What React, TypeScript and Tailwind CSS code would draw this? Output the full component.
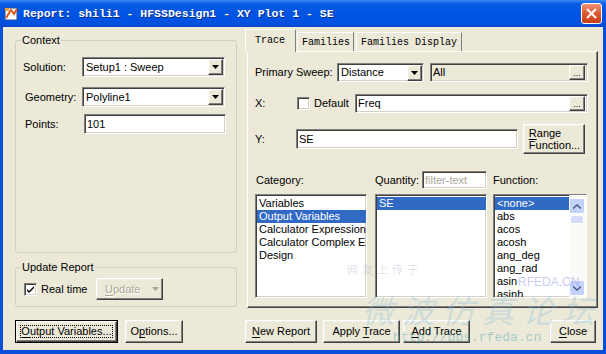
import React from "react";

const sunken =
  "border border-t-[#808080] border-l-[#808080] border-r-white border-b-white shadow-[inset_1px_1px_0_#404040,inset_-1px_-1px_0_#d4d0c8]";
const raised =
  "border border-t-white border-l-white border-r-[#404040] border-b-[#404040] shadow-[inset_-1px_-1px_0_#808080,inset_1px_1px_0_#f1efe2]";

function Arrow({ color = "#000" }: { color?: string }) {
  return (
    <svg width="7" height="4" viewBox="0 0 7 4">
      <path d="M0 0h7L3.5 4z" fill={color} />
    </svg>
  );
}

function DropBtn() {
  return (
    <div className={`w-[15px] h-[16px] bg-[#ece9d8] flex items-center justify-center ${raised}`}>
      <Arrow />
    </div>
  );
}

function Combo({ className = "", value }: { className?: string; value: string }) {
  return (
    <div className={`flex items-center bg-white ${sunken} ${className}`}>
      <span className="flex-1 pl-[3px] whitespace-nowrap overflow-hidden">{value}</span>
      <div className="mr-[1px]">
        <DropBtn />
      </div>
    </div>
  );
}

function Dots() {
  return (
    <div className={`w-[16px] h-[15px] bg-[#ece9d8] flex items-end justify-center pb-[3px] ${raised}`}>
      <span className="text-[9px] leading-[6px]">...</span>
    </div>
  );
}

function Field({
  className = "",
  value,
  dots = false,
  gray = false,
}: {
  className?: string;
  value: string;
  dots?: boolean;
  gray?: boolean;
}) {
  return (
    <div className={`flex items-center ${gray ? "bg-[#ece9d8]" : "bg-white"} ${sunken} ${className}`}>
      <span className="flex-1 pl-[2px] whitespace-nowrap overflow-hidden">{value}</span>
      {dots && (
        <div className="mr-[2px]">
          <Dots />
        </div>
      )}
    </div>
  );
}

function Check({ checked = false }: { checked?: boolean }) {
  return (
    <div className={`w-[13px] h-[13px] bg-white flex items-center justify-center ${sunken}`}>
      {checked && (
        <svg width="7" height="7" viewBox="0 0 7 7">
          <path d="M0 3l2 2 5-5v2L2 7 0 5z" fill="#000" />
        </svg>
      )}
    </div>
  );
}

function Btn({
  className = "",
  children,
  isDefault = false,
}: {
  className?: string;
  children: React.ReactNode;
  isDefault?: boolean;
}) {
  if (isDefault) {
    return (
      <div className={`border border-black ${className}`}>
        <div className={`h-full bg-[#ece9d8] flex items-center justify-center p-[3px] ${raised}`}>
          <div className="w-full h-full flex items-center justify-center border border-dotted border-black">
            {children}
          </div>
        </div>
      </div>
    );
  }
  return (
    <div className={`bg-[#ece9d8] flex items-center justify-center ${raised} ${className}`}>{children}</div>
  );
}

function ScrollArrow({ up }: { up: boolean }) {
  return (
    <div className="w-[16px] h-[16px] rounded-[2px] border border-white bg-[#c4d3fb] flex items-center justify-center">
      <svg width="8" height="5" viewBox="0 0 8 5">
        <path
          d={up ? "M0 4.5L4 1l4 3.5" : "M0 0.5L4 4l4-3.5"}
          fill="none"
          stroke="#4d6185"
          strokeWidth="1.6"
        />
      </svg>
    </div>
  );
}

function ListBox({
  items,
  selected,
  className = "",
  scroll = false,
}: {
  items: string[];
  selected: number;
  className?: string;
  scroll?: boolean;
}) {
  return (
    <div className={`flex bg-white overflow-hidden ${sunken} ${className}`}>
      <div className="flex-1 pt-[2px] pl-[1px] overflow-hidden">
        {items.map((it, i) => (
          <div
            key={it}
            className={`h-[13px] leading-[13px] pl-[2px] whitespace-nowrap overflow-hidden ${
              i === selected ? "bg-[#316ac5] text-white" : ""
            }`}
          >
            {it}
          </div>
        ))}
      </div>
      {scroll && (
        <div className="w-[17px] flex flex-col pt-[3px] pb-[1px] pr-[1px] bg-[#fafaf6]">
          <ScrollArrow up />
          <div className="mt-[1px] h-[9px] mx-[1px] rounded-[2px] bg-[#d3ddfa] border border-white" />
          <div className="flex-1" />
          <ScrollArrow up={false} />
        </div>
      )}
    </div>
  );
}

function U({ children }: { children: React.ReactNode }) {
  return <span className="underline underline-offset-[2px]">{children}</span>;
}

export default function App() {
  return (
    <div className="relative w-[606px] h-[354px] flex flex-col bg-[#ece9d8] text-[11px] leading-[13px] text-black font-['Liberation_Sans',Arial,sans-serif] overflow-hidden">
      {/* Title bar */}
      <div className="h-[27px] flex items-center bg-[linear-gradient(to_bottom,#3d8bf5_0%,#0a5ce6_14%,#0054e3_50%,#0052e0_85%,#0a47c8_100%)]">
        <svg className="ml-[4px]" width="15" height="15" viewBox="0 0 15 15">
          <rect x="1" y="2" width="12" height="12" fill="#fff" stroke="#2a4f9a" />
          <path d="M2 12L7 4l3 4 3-5" fill="none" stroke="#e0561c" strokeWidth="2" />
          <rect x="1" y="2" width="4" height="3" fill="#f0a030" />
        </svg>
        <span className="ml-[4px] text-white font-bold text-[11.5px] font-['Liberation_Mono',monospace] [text-shadow:1px_1px_0_#0a2f8c] whitespace-pre">
          Report: shili1 - HFSSDesign1 - XY Plot 1 - SE
        </span>
        <div className="flex-1" />
        <div className="mr-[4px] w-[21px] h-[21px] rounded-[3px] border border-white bg-[linear-gradient(to_bottom,#f09274,#dc5a30_50%,#c53d14)] flex items-center justify-center">
          <svg width="11" height="11" viewBox="0 0 11 11">
            <path d="M1 1l9 9M10 1l-9 9" stroke="#fff" strokeWidth="2" />
          </svg>
        </div>
      </div>

      {/* Body */}
      <div className="flex-1 flex flex-col border-x-[3px] border-b-[4px] border-[#0a4fd8] pl-[12px] pr-[5px]">
        <div className="flex">
          {/* Left column */}
          <div className="w-[222px] pt-[7px] flex flex-col">
            <fieldset className="h-[219px] border border-[#d0d0bf] rounded-[3px] pl-[7px]">
              <legend className="ml-[-2px] px-[1px]">Context</legend>
              <div className="flex items-center h-[20px] mt-[10px]">
                <span className="w-[59px]">Solution:</span>
                <Combo className="w-[143px] h-[20px]" value="Setup1 : Sweep" />
              </div>
              <div className="flex items-center h-[20px] mt-[10px]">
                <span className="w-[57px] ml-[2px]">Geometry:</span>
                <Combo className="w-[143px] h-[20px]" value="Polyline1" />
              </div>
              <div className="flex items-center h-[20px] mt-[7px]">
                <span className="w-[59px] ml-[2px]">Points:</span>
                <Field className="w-[142px] h-[20px]" value="101" />
              </div>
            </fieldset>
            <fieldset className="mt-[8px] h-[46px] border border-[#d0d0bf] rounded-[3px] pl-[8px]">
              <legend className="ml-[-3px] px-[1px]">Update Report</legend>
              <div className="flex items-center mt-[4px] h-[22px]">
                <Check checked />
                <span className="ml-[4px] w-[55px]">Real time</span>
                <div className={`w-[67px] h-[22px] bg-[#ece9d8] flex items-center pl-[8px] ${raised}`}>
                  <span className="text-[#aca899] [text-shadow:1px_1px_0_#fff]">
                    <U>U</U>pdate
                  </span>
                  <span className="ml-[12px]">
                    <Arrow color="#aca899" />
                  </span>
                </div>
              </div>
            </fieldset>
          </div>

          {/* Right column */}
          <div className="ml-[8px] w-[353px] pt-[2px] flex flex-col">
            <div className="flex items-end h-[22px] font-['Liberation_Mono',monospace] text-[10px]">
              <div className="relative z-10 -mb-[1px] h-[23px] w-[51px] pl-[9px] pt-[4px] bg-[#ece9d8] border-t border-l border-white border-r border-r-[#808080]">
                Trace
              </div>
              <div className="ml-[1px] h-[19px] w-[57px] pl-[4px] pt-[3px] border-t border-l border-white border-r border-r-[#808080]">
                Families
              </div>
              <div className="ml-[2px] h-[19px] w-[106px] pl-[4px] pt-[3px] border-t border-l border-white border-r border-r-[#808080]">
                Families Display
              </div>
            </div>
            <div className="ml-[2px] w-[351px] h-[257px] border border-t-white border-l-white border-r-[#404040] border-b-[#404040] shadow-[inset_-1px_-1px_0_#808080] pl-[7px] flex flex-col">
              <div className="flex items-center mt-[11px] h-[19px]">
                <span className="w-[82px]">Primary Sweep:</span>
                <Combo className="w-[87px] h-[19px]" value="Distance" />
                <Field className="ml-[6px] w-[158px] h-[19px]" value="All" gray dots />
              </div>
              <div className="flex items-center mt-[12px] h-[19px]">
                <span className="w-[42px]">X:</span>
                <Check />
                <span className="ml-[4px] w-[41px]">Default</span>
                <Field className="w-[233px] h-[19px]" value="Freq" dots />
              </div>
              <div className="flex items-center mt-[11px] h-[30px]">
                <span className="w-[41px]">Y:</span>
                <Field className="w-[222px] h-[20px]" value="SE" />
                <Btn className="ml-[5px] w-[62px] h-[30px]">
                  <div className="leading-[12px] pl-[1px]">
                    <div>
                      <U>R</U>ange
                    </div>
                    <div>Function...</div>
                  </div>
                </Btn>
              </div>
              <div className="flex items-center mt-[17px] h-[18px]">
                <span className="ml-[1px] w-[119px]">Category:</span>
                <span className="w-[47px]">Quantity:</span>
                <div className={`w-[65px] h-[18px] bg-white flex items-center pl-[2px] text-[#aca899] ${sunken}`}>
                  filter-text
                </div>
                <span className="ml-[6px]">Function:</span>
              </div>
              <div className="flex mt-[5px] h-[104px]">
                <ListBox
                  className="w-[112px]"
                  selected={1}
                  items={["Variables", "Output Variables", "Calculator Expressions", "Calculator Complex Ex", "Design"]}
                />
                <ListBox className="ml-[8px] w-[112px]" selected={0} items={["SE"]} />
                <ListBox
                  className="ml-[6px] w-[94px]"
                  selected={0}
                  scroll
                  items={["<none>", "abs", "acos", "acosh", "ang_deg", "ang_rad", "asin", "asinh"]}
                />
              </div>
            </div>
          </div>
        </div>

        {/* Bottom buttons */}
        <div className="flex mt-[12px] h-[23px]">
          <Btn isDefault className="w-[103px] h-[23px]">
            <span>
              <U>O</U>utput Variables...
            </span>
          </Btn>
          <Btn className="ml-[7px] w-[58px] h-[23px]">
            <span>
              O<U>p</U>tions...
            </span>
          </Btn>
          <Btn className="ml-[62px] w-[72px] h-[23px]">
            <span>
              <U>N</U>ew Report
            </span>
          </Btn>
          <Btn className="ml-[6px] w-[77px] h-[23px]">
            <span>
              Apply <U>T</U>race
            </span>
          </Btn>
          <Btn className="ml-[3px] w-[67px] h-[23px]">
            <span>
              <U>A</U>dd Trace
            </span>
          </Btn>
          <Btn className="ml-[80px] w-[46px] h-[23px]">
            <span>
              <U>C</U>lose
            </span>
          </Btn>
        </div>
      </div>

      {/* Watermark */}
      <div className="pointer-events-none absolute left-[347px] top-[263px] text-[11px] tracking-[4px] text-[#8a9ab0]/30 font-['Noto_Sans_CJK_SC',sans-serif]">
        网友上传于
      </div>
      <div className="pointer-events-none absolute left-[518px] top-[276px] text-[12px] text-[#8f96ea]/50 font-['Liberation_Sans',sans-serif]">
        RFEDA.CN
      </div>
      <div className="pointer-events-none absolute left-[362px] top-[290px] text-[32px] leading-[38px] tracking-[8px] italic text-[#7cbadb]/30 font-['Noto_Sans_CJK_SC',serif]">
        微波仿真论坛
      </div>
      <div className="pointer-events-none absolute left-[393px] top-[331px] text-[13px] leading-[14px] text-[#4aa0b4]/45 font-['Liberation_Mono',monospace]">
        http://bbs.rfeda.cn
      </div>
    </div>
  );
}
